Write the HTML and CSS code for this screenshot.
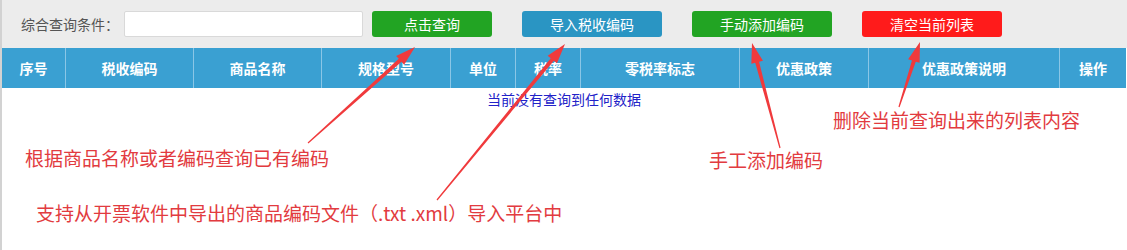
FILE: index.html
```html
<!DOCTYPE html>
<html lang="zh-CN">
<head>
<meta charset="utf-8">
<title>商品编码</title>
<link rel="stylesheet" href="styles.css">
</head>
<body>
<div class="screen">
  <div class="page">
    <div class="toolbar">
      <span class="label">综合查询条件：</span>
      <input class="query" type="text">
      <button class="btn btn-green btn-search">点击查询</button>
      <button class="btn btn-blue btn-wide">导入税收编码</button>
      <button class="btn btn-green btn-wide">手动添加编码</button>
      <button class="btn btn-red btn-wide">清空当前列表</button>
    </div>
    <div class="thead">
      <div class="th">序号</div>
      <div class="th">税收编码</div>
      <div class="th">商品名称</div>
      <div class="th">规格型号</div>
      <div class="th">单位</div>
      <div class="th">税率</div>
      <div class="th">零税率标志</div>
      <div class="th">优惠政策</div>
      <div class="th">优惠政策说明</div>
      <div class="th">操作</div>
    </div>
    <div class="empty">当前没有查询到任何数据</div>
  </div>

  <div class="annotations">
    <svg class="arrows" width="1127" height="250" viewBox="0 0 1127 250">
      <polygon points="308.40,143.45 401.45,61.85 404.12,64.83 415,47 396.10,55.89 398.77,58.87 307.60,142.55"/>
      <polygon points="437.46,200.38 553.86,60.73 556.95,63.27 565,44 547.67,55.65 550.76,58.19 436.54,199.62"/>
      <polygon points="780.58,147.85 759.08,61.80 762.95,60.77 752,43 751.35,63.87 755.22,62.84 779.42,148.15"/>
      <polygon points="899.57,107.18 915.75,61.64 919.56,62.87 920,42 908.14,59.19 911.95,60.42 898.43,106.82"/>
    </svg>
    <span class="note note-query">根据商品名称或者编码查询已有编码</span>
    <span class="note note-import">支持从开票软件中导出的商品编码文件（.txt .xml）导入平台中</span>
    <span class="note note-add">手工添加编码</span>
    <span class="note note-clear">删除当前查询出来的列表内容</span>
  </div>
</div>
</body>
</html>
```

FILE: styles.css
```css
* { box-sizing: border-box; }

html, body {
  margin: 0;
  padding: 0;
  background: #ffffff;
}

body {
  width: 1127px;
  height: 250px;
  overflow: hidden;
  font-family: "Noto Sans CJK SC", "Noto Sans", sans-serif;
}

.screen {
  position: relative;
  width: 1127px;
  height: 250px;
}

.page {
  height: 250px;
  border-left: 2px solid #d2d2d2;
  background: #ffffff;
}

.toolbar {
  height: 48px;
  background: #ececec;
  display: flex;
  align-items: center;
  padding-left: 19px;
}

.label {
  font-size: 14px;
  color: #555555;
  line-height: 26px;
}

.query {
  width: 239px;
  height: 26px;
  margin: 0 0 0 5px;
  border: 1px solid #d9d9d9;
  border-radius: 2px;
  background: #ffffff;
  padding: 0 6px;
}

.btn {
  height: 26px;
  border: none;
  border-radius: 3px;
  color: #ffffff;
  font-family: "Noto Sans CJK SC", "Noto Sans", sans-serif;
  font-size: 14px;
  line-height: 26px;
  padding: 0;
  margin: 0 0 0 30px;
  cursor: pointer;
}

.btn-search {
  width: 120px;
  margin-left: 9px;
}

.btn-wide { width: 140px; }

.btn-green { background: #22a423; }
.btn-blue { background: #2a95c3; }
.btn-red { background: #ff1b1b; }

.thead {
  display: grid;
  grid-template-columns: 64px 128px 128px 129px 65px 65px 159px 129px 191px 66px;
  height: 40px;
  width: 1124px;
  background: #3aa0d2;
}

.th {
  display: flex;
  align-items: center;
  justify-content: center;
  color: #ffffff;
  font-size: 14px;
  font-weight: bold;
  border-right: 1px solid #8ac6e6;
}

.th:last-child { border-right: none; }

.empty {
  width: 1124px;
  height: 22px;
  line-height: 22px;
  text-align: center;
  font-size: 14px;
  color: #2222c8;
}

.annotations {
  position: absolute;
  top: 0;
  left: 0;
  width: 1127px;
  height: 250px;
  pointer-events: none;
}

.arrows {
  position: absolute;
  top: 0;
  left: 0;
}

.arrows polygon {
  fill: #f03a3c;
}

.note {
  position: absolute;
  font-size: 19px;
  line-height: 19px;
  color: #e23b40;
  white-space: nowrap;
}

.note-query { left: 25px; top: 148px; }
.note-import { left: 36px; top: 203px; }
.note-add { left: 709px; top: 150px; }
.note-clear { left: 833px; top: 110px; }
```
